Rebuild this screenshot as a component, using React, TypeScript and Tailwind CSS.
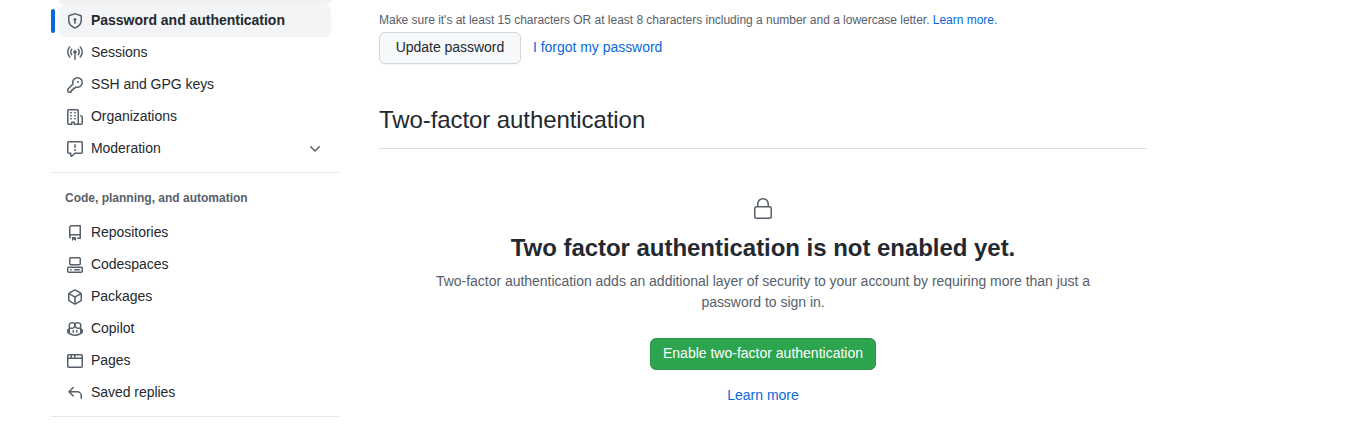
import React from "react";

const paths = {
  shieldLock:
    "m8.533.133 5.25 1.68A1.75 1.75 0 0 1 15 3.48V7c0 1.566-.32 3.182-1.303 4.682-.983 1.498-2.585 2.813-5.032 3.855a1.697 1.697 0 0 1-1.33 0c-2.447-1.042-4.049-2.357-5.032-3.855C1.32 10.182 1 8.566 1 7V3.48a1.755 1.755 0 0 1 1.217-1.667l5.25-1.68a1.748 1.748 0 0 1 1.066 0Zm-.61 1.429.001.001-5.25 1.68a.251.251 0 0 0-.174.237V7c0 1.36.275 2.666 1.057 3.859.784 1.194 2.121 2.342 4.366 3.298a.196.196 0 0 0 .154 0c2.245-.957 3.582-2.103 4.366-3.297C13.225 9.666 13.5 8.358 13.5 7V3.48a.25.25 0 0 0-.174-.238l-5.25-1.68a.25.25 0 0 0-.153 0ZM9.5 6.5c0 .536-.286 1.032-.75 1.3v2.45a.75.75 0 0 1-1.5 0V7.8A1.5 1.5 0 1 1 9.5 6.5Z",
  broadcast:
    "M8.75 8.582v5.668a.75.75 0 0 1-1.5 0V8.582a1.75 1.75 0 1 1 1.5 0Zm3.983-7.125a.75.75 0 0 1 1.06.026A7.976 7.976 0 0 1 16 7c0 2.139-.84 4.083-2.207 5.517a.75.75 0 1 1-1.086-1.034A6.474 6.474 0 0 0 14.5 7a6.474 6.474 0 0 0-1.793-4.483.75.75 0 0 1 .026-1.06Zm-9.466 0c.3.286.312.76.026 1.06A6.474 6.474 0 0 0 1.5 7a6.47 6.47 0 0 0 1.793 4.483.75.75 0 0 1-1.086 1.034A7.973 7.973 0 0 1 0 7c0-2.139.84-4.083 2.207-5.517a.75.75 0 0 1 1.06-.026Zm8.556 2.321A4.988 4.988 0 0 1 13 7a4.988 4.988 0 0 1-1.177 3.222.75.75 0 1 1-1.146-.967A3.487 3.487 0 0 0 11.5 7c0-.86-.309-1.645-.823-2.255a.75.75 0 0 1 1.146-.967Zm-6.492.958A3.48 3.48 0 0 0 4.5 7a3.48 3.48 0 0 0 .823 2.255.75.75 0 0 1-1.146.967A4.981 4.981 0 0 1 3 7a4.982 4.982 0 0 1 1.188-3.236.75.75 0 1 1 1.143.972Z",
  key: "M10.5 0a5.499 5.499 0 1 1-1.288 10.848l-.932.932a.749.749 0 0 1-.53.22H7v.75a.749.749 0 0 1-.22.53l-.5.5a.749.749 0 0 1-.53.22H5v.75a.749.749 0 0 1-.22.53l-.5.5a.749.749 0 0 1-.53.22h-2A1.75 1.75 0 0 1 0 14.25v-2c0-.199.079-.389.22-.53l4.932-4.932A5.5 5.5 0 0 1 10.5 0Zm-4 5.5c-.001.431.069.86.205 1.269a.75.75 0 0 1-.181.768L1.5 12.56v1.69c0 .138.112.25.25.25h1.69l.06-.06v-1.19a.75.75 0 0 1 .75-.75h1.19l.06-.06v-1.19a.75.75 0 0 1 .75-.75h1.19l1.023-1.025a.75.75 0 0 1 .768-.18A4 4 0 1 0 6.5 5.5ZM11 6a1 1 0 1 1 0-2 1 1 0 0 1 0 2Z",
  organization:
    "M1.75 16A1.75 1.75 0 0 1 0 14.25V1.75C0 .784.784 0 1.75 0h8.5C11.216 0 12 .784 12 1.75v12.5c0 .085-.006.168-.018.25h2.268a.25.25 0 0 0 .25-.25V8.285a.25.25 0 0 0-.111-.208l-1.055-.703a.749.749 0 1 1 .832-1.248l1.055.703c.487.325.779.871.779 1.456v5.965A1.75 1.75 0 0 1 14.25 16h-3.5a.766.766 0 0 1-.197-.026c-.099.017-.2.026-.303.026h-3a.75.75 0 0 1-.75-.75V14h-1v1.25a.75.75 0 0 1-.75.75Zm-.25-1.75c0 .138.112.25.25.25H4v-1.25a.75.75 0 0 1 .75-.75h2.5a.75.75 0 0 1 .75.75v1.25h2.25a.25.25 0 0 0 .25-.25V1.75a.25.25 0 0 0-.25-.25h-8.5a.25.25 0 0 0-.25.25ZM3.75 6h.5a.75.75 0 0 1 0 1.5h-.5a.75.75 0 0 1 0-1.5ZM3 3.75A.75.75 0 0 1 3.75 3h.5a.75.75 0 0 1 0 1.5h-.5A.75.75 0 0 1 3 3.75Zm4 3A.75.75 0 0 1 7.75 6h.5a.75.75 0 0 1 0 1.5h-.5A.75.75 0 0 1 7 6.75ZM7.75 3h.5a.75.75 0 0 1 0 1.5h-.5a.75.75 0 0 1 0-1.5ZM3 9.75A.75.75 0 0 1 3.75 9h.5a.75.75 0 0 1 0 1.5h-.5A.75.75 0 0 1 3 9.75ZM7.75 9h.5a.75.75 0 0 1 0 1.5h-.5a.75.75 0 0 1 0-1.5Z",
  report:
    "M0 1.75C0 .784.784 0 1.75 0h12.5C15.216 0 16 .784 16 1.75v9.5A1.75 1.75 0 0 1 14.25 13H8.06l-2.573 2.573A1.458 1.458 0 0 1 3 14.543V13H1.75A1.75 1.75 0 0 1 0 11.25Zm1.75-.25a.25.25 0 0 0-.25.25v9.5c0 .138.112.25.25.25h2a.75.75 0 0 1 .75.75v2.19l2.72-2.72a.749.749 0 0 1 .53-.22h6.5a.25.25 0 0 0 .25-.25v-9.5a.25.25 0 0 0-.25-.25Zm7 2.25v2.5a.75.75 0 0 1-1.5 0v-2.5a.75.75 0 0 1 1.5 0ZM9 9a1 1 0 1 1-2 0 1 1 0 0 1 2 0Z",
  repo: "M2 2.5A2.5 2.5 0 0 1 4.5 0h8.75a.75.75 0 0 1 .75.75v12.5a.75.75 0 0 1-.75.75h-2.5a.75.75 0 0 1 0-1.5h1.75v-2h-8a1 1 0 0 0-.714 1.7.75.75 0 1 1-1.072 1.05A2.495 2.495 0 0 1 2 11.5Zm10.5-1h-8a1 1 0 0 0-1 1v6.708A2.486 2.486 0 0 1 4.5 9h8ZM5 12.25a.25.25 0 0 1 .25-.25h3.5a.25.25 0 0 1 .25.25v3.25a.25.25 0 0 1-.4.2l-1.45-1.087a.249.249 0 0 0-.3 0L5.4 15.7a.25.25 0 0 1-.4-.2Z",
  codespaces:
    "M0 11.25c0-.966.784-1.75 1.75-1.75h12.5c.966 0 1.75.784 1.75 1.75v3A1.75 1.75 0 0 1 14.25 16H1.75A1.75 1.75 0 0 1 0 14.25Zm2-9.5C2 .784 2.784 0 3.75 0h8.5C13.216 0 14 .784 14 1.75v5a1.75 1.75 0 0 1-1.75 1.75h-8.5A1.75 1.75 0 0 1 2 6.75Zm1.75-.25a.25.25 0 0 0-.25.25v5c0 .138.112.25.25.25h8.5a.25.25 0 0 0 .25-.25v-5a.25.25 0 0 0-.25-.25Zm-2 9.5a.25.25 0 0 0-.25.25v3c0 .138.112.25.25.25h12.5a.25.25 0 0 0 .25-.25v-3a.25.25 0 0 0-.25-.25ZM7 12.75a.75.75 0 0 1 .75-.75h4.5a.75.75 0 0 1 0 1.5h-4.5a.75.75 0 0 1-.75-.75Zm-4 0a.75.75 0 0 1 .75-.75h.5a.75.75 0 0 1 0 1.5h-.5a.75.75 0 0 1-.75-.75Z",
  package:
    "m8.878.392 5.25 3.045c.54.314.872.89.872 1.514v6.098a1.75 1.75 0 0 1-.872 1.514l-5.25 3.045a1.75 1.75 0 0 1-1.756 0l-5.25-3.045A1.75 1.75 0 0 1 1 11.049V4.951c0-.624.332-1.201.872-1.514L7.122.392a1.75 1.75 0 0 1 1.756 0ZM7.875 1.69l-4.63 2.685L8 7.133l4.755-2.758-4.63-2.685a.248.248 0 0 0-.25 0ZM2.5 5.677v5.372c0 .09.047.171.125.216l4.625 2.683V8.432Zm6.25 8.271 4.625-2.683a.25.25 0 0 0 .125-.216V5.677L8.75 8.432Z",
  copilot:
    "M7.998 15.035c-4.562 0-7.873-2.914-7.998-3.749V9.338c.085-.628.677-1.686 1.588-2.065.013-.07.024-.143.036-.218.029-.183.06-.384.126-.612-.201-.508-.254-1.084-.254-1.656 0-.87.128-1.769.693-2.484.579-.733 1.494-1.124 2.724-1.261 1.206-.134 2.262.034 2.944.765.05.053.096.108.139.165.044-.057.094-.112.143-.165.682-.731 1.738-.899 2.944-.765 1.23.137 2.145.528 2.724 1.261.566.715.693 1.614.693 2.484 0 .572-.053 1.148-.254 1.656.066.228.098.429.126.612.012.076.024.148.037.218.924.385 1.522 1.471 1.591 2.095v1.872c0 .766-3.351 3.795-8.002 3.795Zm0-1.485c2.28 0 4.584-1.11 5.002-1.433V7.862l-.023-.116c-.49.21-1.075.291-1.727.291-1.146 0-2.059-.327-2.71-.991A3.222 3.222 0 0 1 8 6.303a3.24 3.24 0 0 1-.544.743c-.65.664-1.563.991-2.71.991-.652 0-1.236-.081-1.727-.291l-.023.116v4.255c.419.323 2.722 1.433 5.002 1.433ZM6.762 2.83c-.193-.206-.637-.413-1.682-.297-1.019.113-1.479.404-1.713.7-.247.312-.369.789-.369 1.554 0 .793.129 1.171.308 1.371.162.181.519.379 1.442.379.853 0 1.339-.235 1.638-.54.315-.322.527-.827.617-1.553.117-.935-.037-1.395-.241-1.614Zm4.155-.297c-1.044-.116-1.488.091-1.681.297-.204.219-.359.679-.242 1.614.091.726.303 1.231.618 1.553.299.305.784.54 1.638.54.922 0 1.28-.198 1.442-.379.179-.2.308-.578.308-1.371 0-.765-.123-1.242-.37-1.554-.233-.296-.693-.587-1.713-.7ZM6.25 9.037a.75.75 0 0 1 .75.75v1.501a.75.75 0 0 1-1.5 0V9.787a.75.75 0 0 1 .75-.75Zm4.25.75v1.501a.75.75 0 0 1-1.5 0V9.787a.75.75 0 0 1 1.5 0Z",
  browser:
    "M0 2.75C0 1.784.784 1 1.75 1h12.5c.966 0 1.75.784 1.75 1.75v10.5A1.75 1.75 0 0 1 14.25 15H1.75A1.75 1.75 0 0 1 0 13.25ZM14.5 6h-13v7.25c0 .138.112.25.25.25h12.5a.25.25 0 0 0 .25-.25Zm-6-3.5v2h6V2.75a.25.25 0 0 0-.25-.25ZM5 2.5v2h2v-2Zm-3.25 0a.25.25 0 0 0-.25.25V4.5h2v-2Z",
  reply:
    "M6.78 1.97a.75.75 0 0 1 0 1.06L3.81 6h6.44A4.75 4.75 0 0 1 15 10.75v2.5a.75.75 0 0 1-1.5 0v-2.5a3.25 3.25 0 0 0-3.25-3.25H3.81l2.97 2.97a.749.749 0 0 1-.326 1.275.749.749 0 0 1-.734-.215L1.47 7.28a.75.75 0 0 1 0-1.06l4.25-4.25a.75.75 0 0 1 1.06 0Z",
  chevronDown:
    "M12.78 5.22a.749.749 0 0 1 0 1.06l-4.25 4.25a.749.749 0 0 1-1.06 0L3.22 6.28a.749.749 0 1 1 1.06-1.06L8 8.939l3.72-3.719a.749.749 0 0 1 1.06 0Z",
};

type IconName = keyof typeof paths;

function Icon({ name }: { name: IconName }) {
  return (
    <svg viewBox="0 0 16 16" className="size-4 shrink-0 fill-[#57606a]" aria-hidden="true">
      <path d={paths[name]} />
    </svg>
  );
}

type Item = { icon: IconName; label: string; expandable?: boolean };

const accessItems: Item[] = [
  { icon: "broadcast", label: "Sessions" },
  { icon: "key", label: "SSH and GPG keys" },
  { icon: "organization", label: "Organizations" },
  { icon: "report", label: "Moderation", expandable: true },
];

const codeItems: Item[] = [
  { icon: "repo", label: "Repositories" },
  { icon: "codespaces", label: "Codespaces" },
  { icon: "package", label: "Packages" },
  { icon: "copilot", label: "Copilot" },
  { icon: "browser", label: "Pages" },
  { icon: "reply", label: "Saved replies" },
];

function NavItem({ icon, label, expandable }: Item) {
  return (
    <li className="mx-2 flex h-8 items-center gap-2 px-2">
      <Icon name={icon} />
      <a href="#" className="grow pb-0.5 leading-5 tracking-[-0.04px]">{label}</a>
      {expandable && <Icon name="chevronDown" />}
    </li>
  );
}

function Sidebar() {
  return (
    <nav className="w-72 shrink-0">
      <div className="mx-2 h-[5px] rounded-b-md bg-[#f1f2f4]" />
      <div className="flex h-8 items-center">
        <div className="h-6 w-1 rounded-md bg-[#0969da]" />
        <a
          href="#"
          className="ml-1 flex h-8 w-[272px] items-center gap-2 rounded-md bg-[#f3f4f6] px-2 font-bold leading-5"
        >
          <Icon name="shieldLock" />
          <span className="pb-0.5 tracking-[-0.02px]">Password and authentication</span>
        </a>
      </div>
      <ul>
        {accessItems.map((item) => (
          <NavItem key={item.label} {...item} />
        ))}
      </ul>
      <div className="mt-[7px] h-px bg-[#e4e7ea]" />
      <h3 className="mt-4 px-3.5 text-xs font-bold leading-[18px] text-[#57606a]">
        Code, planning, and automation
      </h3>
      <ul className="mt-2.5">
        {codeItems.map((item) => (
          <NavItem key={item.label} {...item} />
        ))}
      </ul>
      <div className="mt-[7px] h-px bg-[#e4e7ea]" />
    </nav>
  );
}

export default function App() {
  return (
    <div className="flex h-[435px] overflow-hidden bg-white pl-[51px] font-['Liberation_Sans',Arial,sans-serif] text-sm text-[#24292f]">
      <Sidebar />
      <main className="ml-10 w-[768px] shrink-0">
        <p className="mt-[11px] text-xs leading-[18px] tracking-[-0.02px] text-[#57606a]">
          Make sure it's at least 15 characters OR at least 8 characters including a number and a lowercase letter.{" "}
          <a href="#" className="text-[#0969da]">Learn more.</a>
        </p>
        <div className="mt-[3px] flex items-center gap-3 tracking-[-0.03px]">
          <button className="h-8 w-[142px] rounded-md border border-[#d3d6d9] bg-[#f6f8fa] pb-0.5 leading-5 shadow-[0_1px_0_rgba(27,31,36,0.04)]">
            Update password
          </button>
          <a href="#" className="pb-0.5 leading-5 text-[#0969da]">I forgot my password</a>
        </div>
        <h2 className="mt-[38px] border-b border-[#d8dee4] pb-2.5 text-2xl leading-9 tracking-[-0.08px]">
          Two-factor authentication
        </h2>
        <section className="flex flex-col items-center pt-12 text-center">
          <svg viewBox="0 0 24 24" className="size-6 fill-[#57606a]" aria-hidden="true">
            <path d="M6 9V7.25C6 3.845 8.503 1 12 1s6 2.845 6 6.25V9h.5a2.5 2.5 0 0 1 2.5 2.5v8a2.5 2.5 0 0 1-2.5 2.5h-13A2.5 2.5 0 0 1 3 19.5v-8A2.5 2.5 0 0 1 5.5 9Zm-1.5 2.5v8a1 1 0 0 0 1 1h13a1 1 0 0 0 1-1v-8a1 1 0 0 0-1-1h-13a1 1 0 0 0-1 1Zm3-4.25V9h9V7.25c0-2.67-1.922-4.75-4.5-4.75-2.578 0-4.5 2.08-4.5 4.75Z" />
          </svg>
          <h3 className="mt-[9px] text-2xl font-bold leading-9 tracking-[-0.04px]">
            Two factor authentication is not enabled yet.
          </h3>
          <p className="mt-[5px] w-[670px] leading-[21px] tracking-[-0.025px] text-[#57606a]">
            Two-factor authentication adds an additional layer of security to your account by requiring more than just a
            password to sign in.
          </p>
          <button className="mt-[25px] h-8 w-[226px] rounded-md border border-[#2a9148] bg-[#2da44e] pb-0.5 leading-5 text-white">
            Enable two-factor authentication
          </button>
          <a href="#" className="mt-[15px] leading-5 text-[#0969da]">Learn more</a>
        </section>
      </main>
    </div>
  );
}
